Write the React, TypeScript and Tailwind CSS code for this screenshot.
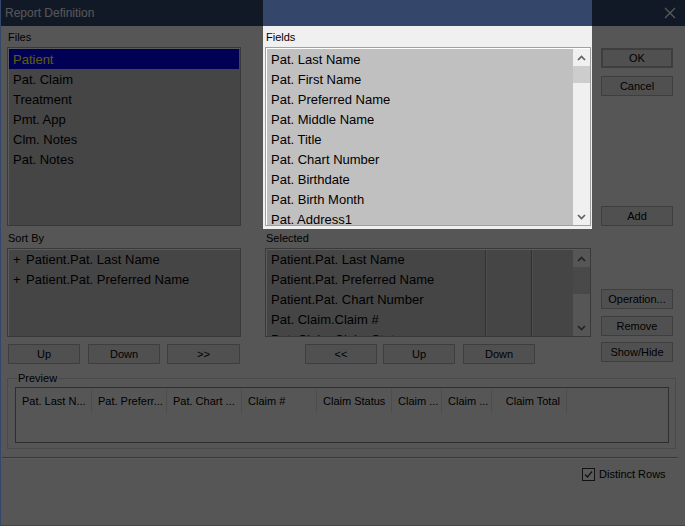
import * as React from "react";

const files = ["Patient", "Pat. Claim", "Treatment", "Pmt. App", "Clm. Notes", "Pat. Notes"];

const fields = [
  "Pat. Last Name",
  "Pat. First Name",
  "Pat. Preferred Name",
  "Pat. Middle Name",
  "Pat. Title",
  "Pat. Chart Number",
  "Pat. Birthdate",
  "Pat. Birth Month",
  "Pat. Address1",
];

const sortBy = ["Patient.Pat. Last Name", "Patient.Pat. Preferred Name"];

const selected = [
  "Patient.Pat. Last Name",
  "Patient.Pat. Preferred Name",
  "Patient.Pat. Chart Number",
  "Pat. Claim.Claim #",
  "Pat. Claim.Claim Status",
];

// preview header columns: label, width, right aligned
const previewCols: [string, number, boolean][] = [
  ["Pat. Last N...", 76, false],
  ["Pat. Preferr...", 75, false],
  ["Pat. Chart ...", 75, false],
  ["Claim #", 75, false],
  ["Claim Status", 75, false],
  ["Claim ...", 50, false],
  ["Claim ...", 50, false],
  ["Claim Total", 75, true],
];

function Button({ children, className = "" }: { children: React.ReactNode; className?: string }) {
  return (
    <div
      className={
        "flex h-[20px] w-[72px] items-center justify-center border border-[#adadad] bg-[#e1e1e1] text-[11px] leading-none text-black " +
        className
      }
    >
      {children}
    </div>
  );
}

function Chevron({ down = false }: { down?: boolean }) {
  return (
    <svg width="9" height="6" viewBox="0 0 9 6" className={down ? "rotate-180" : ""}>
      <polyline points="1,5 4.5,1.5 8,5" fill="none" stroke="#606060" strokeWidth="1.7" />
    </svg>
  );
}

function ScrollBar({ thumb }: { thumb: number }) {
  return (
    <div className="flex w-[17px] flex-col bg-[#f0f0f0]">
      <div className="flex h-[17px] items-center justify-center">
        <Chevron />
      </div>
      <div className="w-full bg-[#cdcdcd]" style={{ height: thumb }} />
      <div className="flex-1" />
      <div className="flex h-[17px] items-center justify-center">
        <Chevron down />
      </div>
    </div>
  );
}

function ListBox({ height, children }: { height: number; children: React.ReactNode }) {
  return (
    <div className="flex border border-[#a0a0a0] bg-white pt-px pl-px" style={{ height }}>
      <div className="flex min-w-0 flex-1 overflow-hidden bg-[#c0c0c0]">{children}</div>
    </div>
  );
}

function Label({ children }: { children: React.ReactNode }) {
  return <div className="h-[16px] pl-px text-[11px] leading-[16px] text-black">{children}</div>;
}

export default function App() {
  return (
    <div className="relative flex h-[526px] w-[685px] flex-col overflow-hidden border-b border-l border-[#34466a] bg-[#f0f0f0] font-['Liberation_Sans',Arial,sans-serif]">
      {/* title bar */}
      <div className="flex h-[26px] shrink-0 items-center justify-between bg-[#34466a] pr-[9px] pl-[4px]">
        <span className="text-[12px] text-[#eef1f6]">Report Definition</span>
        <svg width="12" height="12" viewBox="0 0 12 12">
          <path d="M1 1 L11 11 M11 1 L1 11" stroke="#ffffff" strokeWidth="1.2" />
        </svg>
      </div>

      <div className="flex flex-1 flex-col pt-[3px]">
        <div className="flex pl-[6px]">
          {/* left column */}
          <div className="flex w-[234px] flex-col">
            <Label>Files</Label>
            <div className="mt-[2px]">
              <ListBox height={179}>
                <div className="flex-1 pr-px">
                  {files.map((f, i) => (
                    <div
                      key={f}
                      className={
                        "h-[20px] pt-[2px] pl-[4px] text-[13px] leading-[18px] " +
                        (i === 0 ? "bg-[#0000ee] text-[#ffff33]" : "text-black")
                      }
                    >
                      {f}
                    </div>
                  ))}
                </div>
              </ListBox>
            </div>
            <div className="mt-[4px]">
              <Label>Sort By</Label>
            </div>
            <div className="mt-[2px]">
              <ListBox height={89}>
                <div className="flex-1">
                  {sortBy.map((s) => (
                    <div key={s} className="flex h-[20px] pl-[4px] text-[13px] leading-[20px] text-black">
                      <span className="w-[13px]">+</span>
                      <span>{s}</span>
                    </div>
                  ))}
                </div>
              </ListBox>
            </div>
            <div className="mt-[7px] flex pl-px">
              <Button>Up</Button>
              <Button className="ml-[8px]">Down</Button>
              <Button className="ml-[7px] w-[73px]">&gt;&gt;</Button>
            </div>
          </div>

          {/* middle column */}
          <div className="ml-[24px] flex w-[326px] flex-col">
            <Label>Fields</Label>
            <div className="mt-[2px]">
              <ListBox height={179}>
                <div className="flex-1">
                  {fields.map((f) => (
                    <div key={f} className="h-[20px] pt-[2px] pl-[4px] text-[13px] leading-[18px] text-black">
                      {f}
                    </div>
                  ))}
                </div>
                <ScrollBar thumb={17} />
              </ListBox>
            </div>
            <div className="mt-[4px]">
              <Label>Selected</Label>
            </div>
            <div className="mt-[2px]">
              <ListBox height={89}>
                <div className="flex-1 overflow-hidden">
                  {selected.map((s) => (
                    <div key={s} className="h-[20px] pl-[4px] text-[13px] leading-[20px] whitespace-nowrap text-black">
                      {s}
                    </div>
                  ))}
                </div>
                <div className="w-[46px] border-l border-[#8c8c8c] shadow-[inset_1px_0_0_#d8d8d8]" />
                <div className="w-[42px] border-l border-[#8c8c8c] shadow-[inset_1px_0_0_#d8d8d8]" />
                <ScrollBar thumb={27} />
              </ListBox>
            </div>
            <div className="mt-[7px] flex pl-[40px]">
              <Button>&lt;&lt;</Button>
              <Button className="ml-[6px]">Up</Button>
              <Button className="ml-[8px]">Down</Button>
            </div>
          </div>

          {/* right column */}
          <div className="ml-[10px] flex flex-col">
            <Button className="mt-[19px] border-2 border-[#0078d7]">OK</Button>
            <Button className="mt-[8px]">Cancel</Button>
            <Button className="mt-[110px]">Add</Button>
            <Button className="mt-[63px]">Operation...</Button>
            <Button className="mt-[7px]">Remove</Button>
            <Button className="mt-[6px]">Show/Hide</Button>
          </div>
        </div>

        {/* preview group */}
        <div className="relative mt-[14px] ml-[6px] h-[71px] w-[669px] border border-[#d0d0d0] pt-[8px] pl-[7px]">
          <span className="absolute -top-[8px] left-[9px] bg-[#f0f0f0] px-px text-[11px] leading-[14px] text-black">
            Preview
          </span>
          <div className="h-[56px] w-[654px] border border-[#828282] bg-[#f0f0f0]">
            <div className="flex h-[25px] pt-px">
              {previewCols.map(([label, w, right], i) => (
                <div
                  key={i}
                  className={
                    "flex h-[24px] items-center border-r border-[#d4d4d4] px-[6px] text-[11px] whitespace-nowrap text-black " +
                    (right ? "justify-end" : "justify-start")
                  }
                  style={{ width: w }}
                >
                  {label}
                </div>
              ))}
            </div>
          </div>
        </div>

        {/* separator */}
        <div className="mt-[8px] ml-px h-[2px] w-[676px] border-t border-b border-t-[#a0a0a0] border-b-white" />

        {/* distinct rows */}
        <div className="mt-[9px] flex items-center pl-[581px]">
          <div className="flex h-[13px] w-[13px] items-center justify-center border border-[#333333] bg-white">
            <svg width="9" height="9" viewBox="0 0 9 9">
              <polyline points="1,4.5 3.5,7 8,1.5" fill="none" stroke="#333333" strokeWidth="1.3" />
            </svg>
          </div>
          <span className="ml-[4px] text-[11px] leading-[13px] text-black">Distinct Rows</span>
        </div>
      </div>

      {/* dimming overlay with spotlight on the Fields list */}
      <div className="pointer-events-none absolute inset-0 z-10">
        <div className="absolute top-0 left-[262px] h-[229px] w-[329px] shadow-[0_0_0_2000px_rgba(0,0,0,0.645)]" />
      </div>
    </div>
  );
}
